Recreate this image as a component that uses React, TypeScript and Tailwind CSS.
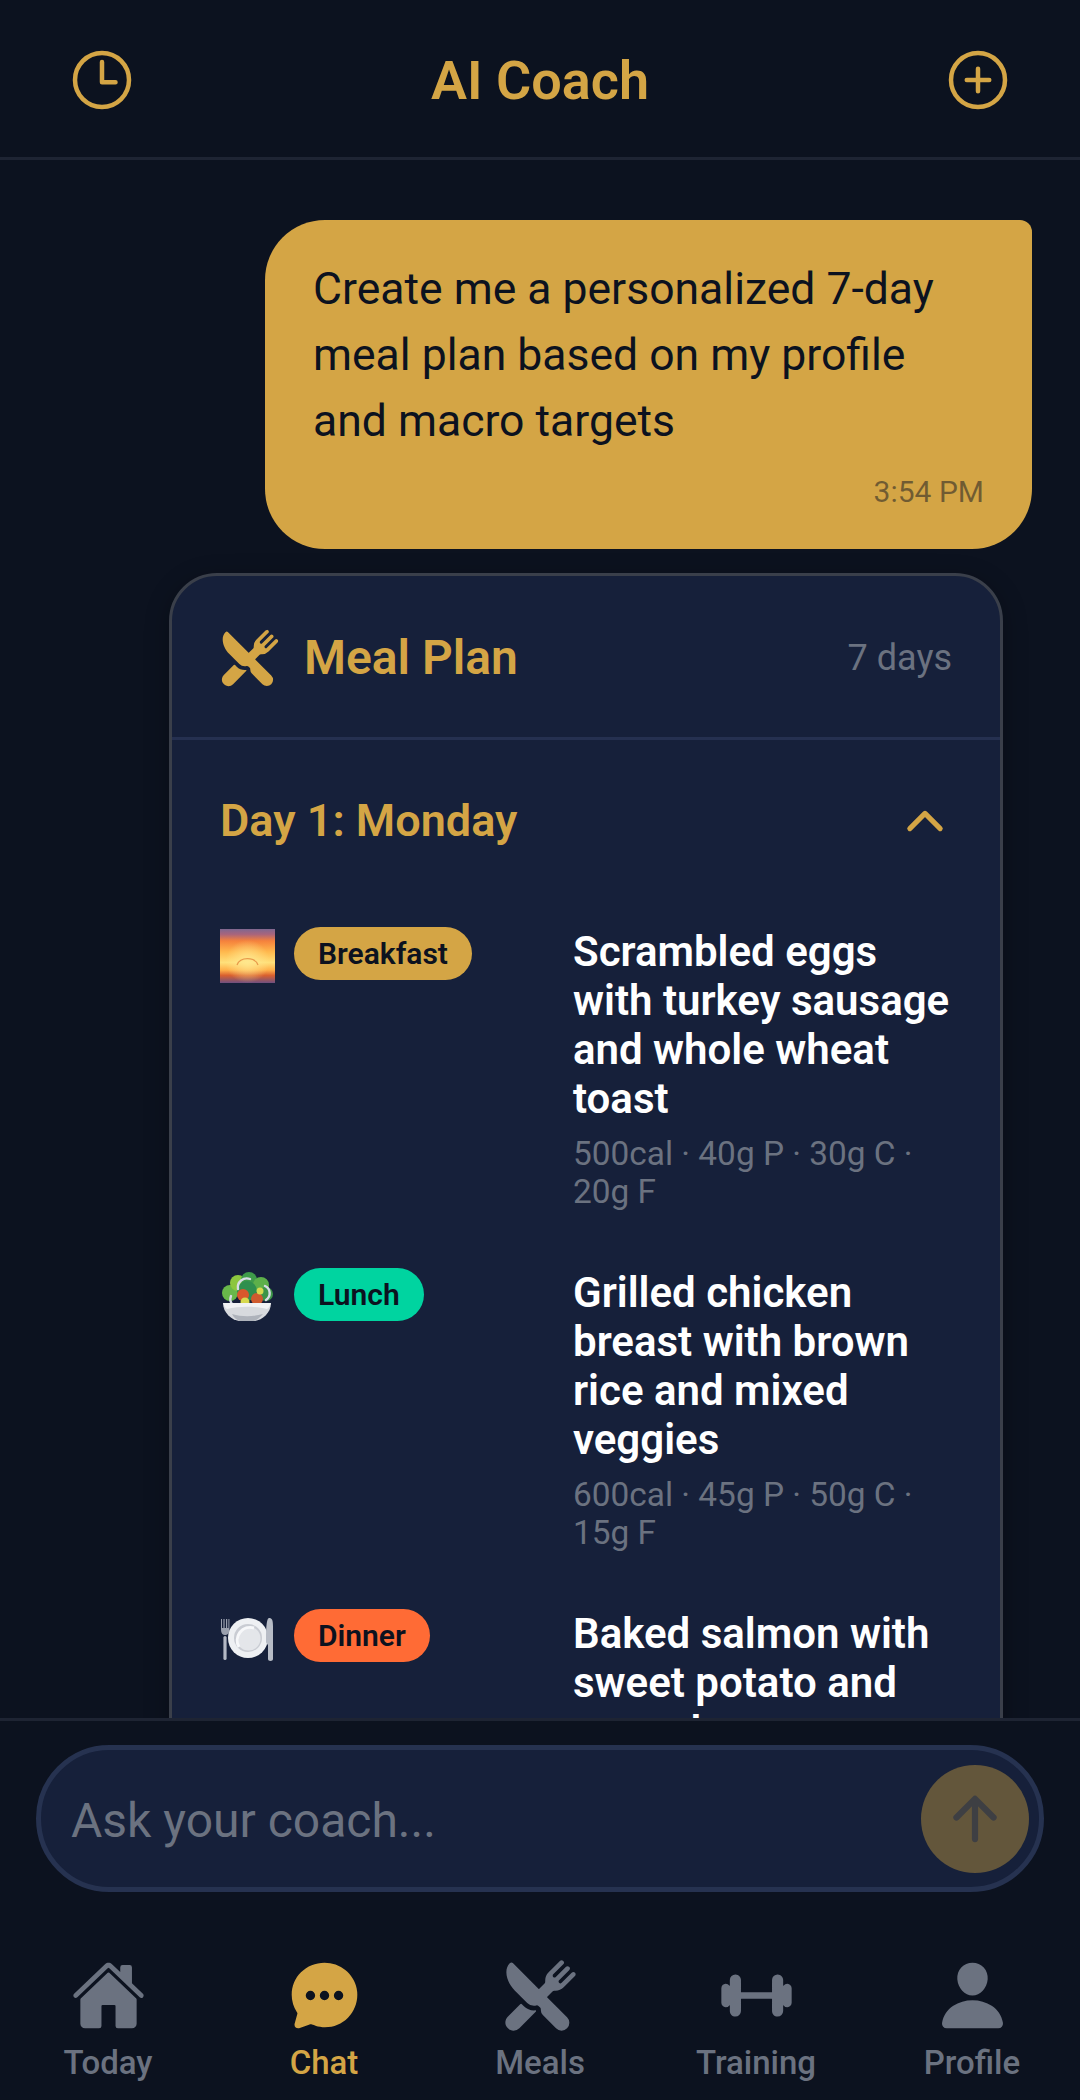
import React from 'react';
import {
  IoTimeOutline,
  IoAddCircleOutline,
  IoRestaurant,
  IoChevronUp,
  IoArrowUp,
  IoHome,
  IoChatbubbleEllipses,
  IoBarbell,
  IoPerson,
} from 'react-icons/io5';

function SunriseEmoji() {
  return (
    <svg viewBox="0 0 55 54" className="h-[54px] w-[55px]">
      <defs>
        <linearGradient id="sky" x1="0" y1="0" x2="0" y2="1">
          <stop offset="0" stopColor="#7f6790" />
          <stop offset="0.1" stopColor="#a9657c" />
          <stop offset="0.22" stopColor="#f5813c" />
          <stop offset="0.42" stopColor="#ffb84d" />
          <stop offset="0.62" stopColor="#ffe07a" />
          <stop offset="0.76" stopColor="#ffb04a" />
          <stop offset="0.86" stopColor="#d9602f" />
          <stop offset="1" stopColor="#6f4f80" />
        </linearGradient>
        <radialGradient id="glow" cx="0.5" cy="0.6" r="0.4">
          <stop offset="0" stopColor="#ffe890" stopOpacity="0.9" />
          <stop offset="1" stopColor="#ffe890" stopOpacity="0" />
        </radialGradient>
      </defs>
      <rect width="55" height="54" fill="url(#sky)" />
      <rect width="55" height="54" fill="url(#glow)" />
      <path d="M17 36a11 9 0 0 1 21 0" fill="none" stroke="#e8994a" strokeWidth="1.2" />
    </svg>
  );
}

function SaladEmoji() {
  return (
    <svg viewBox="0 0 55 54" className="h-[54px] w-[55px]">
      <circle cx="10" cy="24" r="8" fill="#69b84a" />
      <circle cx="18" cy="14" r="8" fill="#8cc63f" />
      <circle cx="29" cy="11" r="8" fill="#3f9b4a" />
      <circle cx="41" cy="16" r="8" fill="#5db04a" />
      <circle cx="46" cy="25" r="7" fill="#3c9448" />
      <circle cx="27" cy="22" r="10" fill="#2f8f4e" />
      <circle cx="23" cy="26" r="6" fill="#d9572c" />
      <circle cx="37" cy="30" r="6" fill="#cf5a2e" />
      <circle cx="25" cy="33" r="4.5" fill="#d7d94f" />
      <circle cx="40" cy="22" r="3.5" fill="#d7d94f" />
      <path d="M18 20a9 9 0 0 1 12-10" fill="none" stroke="#d8dbe6" strokeWidth="2.4" strokeLinecap="round" />
      <path d="M45 17a8 8 0 0 1 1 14" fill="none" stroke="#d8dbe6" strokeWidth="2.4" strokeLinecap="round" />
      <path d="M11 27a8 8 0 0 0 2 9" fill="none" stroke="#d8dbe6" strokeWidth="2.4" strokeLinecap="round" />
      <path d="M3 34h48c0 10-9 17-16 18H19C12 51 3 44 3 34z" fill="#d7dade" />
      <path d="M3 34h48c-1 3-2 5-4 6-12-3-28-3-40 0-2-1-3-3-4-6z" fill="#f1f2f4" />
      <path d="M12 45c10 3 20 3 31 0-4 4-6 6-9 7H20c-3-1-6-3-8-7z" fill="#aeb3bb" />
    </svg>
  );
}

function PlateEmoji() {
  return (
    <svg viewBox="0 0 55 44" className="h-[44px] w-[55px]">
      <rect x="3.4" y="19" width="3.2" height="24" rx="1.6" fill="#b3b8c4" />
      <path d="M1 2h1v9h1.400V2h1.200v9H6V2h1.200v9h1.200V2h1v11c0 3-2 5-4.400 5S1 16 1 13z" fill="#9aa0ae" />
      <circle cx="28" cy="21" r="20" fill="#eef0f3" />
      <circle cx="28" cy="21" r="14" fill="#c9ccd3" />
      <circle cx="28.500" cy="21.500" r="12" fill="#e4e6ea" />
      <path d="M19 30a13 13 0 0 1 15-19" fill="none" stroke="#f7f8fa" strokeWidth="3" />
      <path d="M49 1c3 0 4 2 4 8v33c0 1-1 2-2.500 2S48 43 48 42V28c-1-1-2-2-2-3 0-8 0-24 3-24z" fill="#b7bcc6" />
    </svg>
  );
}

const meals = [
  {
    Emoji: SunriseEmoji,
    label: 'Breakfast',
    color: 'bg-[#d4a545]',
    title: 'Scrambled eggs with turkey sausage and whole wheat toast',
    macros: '500cal · 40g P · 30g C · 20g F',
    emojiBox: 'pt-[2px]',
  },
  {
    Emoji: SaladEmoji,
    label: 'Lunch',
    color: 'bg-[#00d4a0]',
    title: 'Grilled chicken breast with brown rice and mixed veggies',
    macros: '600cal · 45g P · 50g C · 15g F',
    emojiBox: 'pt-[1px]',
  },
  {
    Emoji: PlateEmoji,
    label: 'Dinner',
    color: 'bg-[#ff6b35]',
    title: 'Baked salmon with sweet potato and green beans',
    macros: '550cal · 40g P · 45g C · 18g F',
    emojiBox: 'pt-[8px]',
  },
];

const tabs = [
  { label: 'Today', Icon: IoHome },
  { label: 'Chat', Icon: IoChatbubbleEllipses, active: true },
  { label: 'Meals', Icon: IoRestaurant },
  { label: 'Training', Icon: IoBarbell },
  { label: 'Profile', Icon: IoPerson },
];

function App() {
  return (
    <div className="flex h-[2100px] w-[1080px] flex-col overflow-hidden bg-[#0c121f] font-['Roboto','Noto_Sans',sans-serif]">
      {/* header */}
      <header className="flex h-[160px] shrink-0 items-center justify-between border-b-[3px] border-[#1e2433] px-[66px] pt-[2px] text-[#d4a545]">
        <IoTimeOutline className="h-[72px] w-[72px]" />
        <h1 className="pt-[1px] text-[54px] font-semibold">AI Coach</h1>
        <IoAddCircleOutline className="h-[72px] w-[72px]" />
      </header>

      {/* messages */}
      <main className="min-h-0 flex-1 overflow-hidden pt-[60px]">
        <div className="ml-[265px] w-[767px] rounded-[60px] rounded-tr-[12px] bg-[#d4a545] px-[48px] pt-[36px] pb-[39px]">
          <p className="text-[44.5px] leading-[66px] text-[#0c121f]">
            Create me a personalized 7-day meal plan based on my profile and macro targets
          </p>
          <p className="mt-[20px] text-right text-[30px] leading-[36px] text-[#0c121f]/50">3:54 PM</p>
        </div>

        <div className="mt-[24px] ml-[169px] w-[834px] rounded-[48px] border-[3px] border-[#3a3f4a] bg-[#16203a] shadow-[0_6px_24px_rgba(0,0,0,0.3)]">
          <div className="flex h-[164px] items-center justify-between border-b-[3px] border-[#253050] px-[48px] pt-[2px]">
            <div className="flex items-center gap-[24px]">
              <IoRestaurant className="h-[60px] w-[60px] text-[#d4a545]" />
              <span className="text-[48px] font-semibold text-[#d4a545]">Meal Plan</span>
            </div>
            <span className="text-[36px] text-[#6b7280]">7 days</span>
          </div>

          <div className="px-[48px]">
            <div className="flex h-[161px] items-center justify-between">
              <span className="text-[45px] font-semibold text-[#d4a545]">Day 1: Monday</span>
              <IoChevronUp className="h-[54px] w-[54px] text-[#d4a545]" />
            </div>

            <div className="flex flex-col gap-[57px] pt-[26px]">
              {meals.map(({ Emoji, label, color, title, macros, emojiBox }) => (
                <div key={label} className="flex">
                  <div className="flex w-[353px] shrink-0 items-start gap-[19px]">
                    <div className={emojiBox}>
                      <Emoji />
                    </div>
                    <span className={`rounded-full px-[24px] text-[30px] font-semibold leading-[53px] text-[#0c121f] ${color}`}>
                      {label}
                    </span>
                  </div>
                  <div className="w-[382px]">
                    <p className="text-[42px] font-semibold leading-[49px] text-white">{title}</p>
                    <p className="mt-[12px] text-[33.4px] leading-[38px] text-[#6b7280]">{macros}</p>
                  </div>
                </div>
              ))}
            </div>
          </div>
        </div>
      </main>

      {/* input + tabs */}
      <footer className="relative h-[382px] shrink-0 border-t-[3px] border-[#1e2433] bg-[#0c121f]">
        <div className="mx-[36px] mt-[24px] flex h-[147px] items-center justify-between rounded-full border-[5px] border-[#263250] bg-[#16203a] pr-[10px] pl-[30px]">
          <span className="pt-[5px] text-[48px] text-[#6b7280]">Ask your coach...</span>
          <div className="flex h-[108px] w-[108px] items-center justify-center rounded-full bg-[#63563b] text-[#3e3f43]">
            <IoArrowUp className="h-[66px] w-[66px]" />
          </div>
        </div>

        <nav className="mt-[66px] grid grid-cols-5">
          {tabs.map(({ label, Icon, active }) => (
            <div key={label} className={`flex flex-col items-center ${active ? 'text-[#d4a545]' : 'text-[#6b7280]'}`}>
              <Icon className="mb-[10px] h-[75px] w-[75px]" />
              <span className="text-[33px] font-medium leading-[39px]">{label}</span>
            </div>
          ))}
        </nav>
      </footer>
    </div>
  );
}

export default App;
